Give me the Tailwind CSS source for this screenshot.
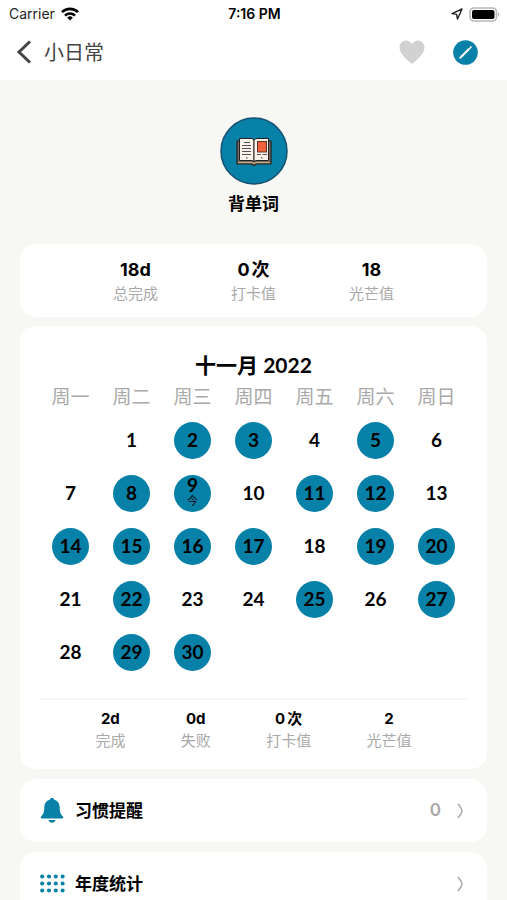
<!DOCTYPE html>
<html lang="zh-CN">
  <head>
    <meta charset="UTF-8" />
    <meta name="viewport" content="width=device-width, initial-scale=1.0" />
    <title>小日常</title>
    <script src="https://cdn.jsdelivr.net/npm/@tailwindcss/browser@4"></script>
  </head>
  <body
    class="h-screen overflow-hidden bg-[#f7f7f3] text-black font-['Inter','Noto_Sans_CJK_SC',sans-serif]"
  >
    <header class="bg-white">
      <!-- status bar -->
      <div class="grid grid-cols-3 items-center h-7 pl-[9px] pr-[7px] text-sm">
        <div class="flex items-center gap-1.5 text-[#222]">
          <span>Carrier</span>
          <svg class="w-[18px] h-[14px]" viewBox="0 0 18 14" fill="none" stroke="#000" stroke-width="2.6">
            <path d="M1 5.2a11.3 11.3 0 0 1 16 0" />
            <path d="M4 8.6a7.1 7.1 0 0 1 10 0" />
            <path d="M9 13.6 6.2 10.7a4 4 0 0 1 5.6 0z" fill="#000" stroke="none" />
          </svg>
        </div>
        <div class="text-center font-semibold">7:16 PM</div>
        <div class="flex items-center justify-end gap-1.5">
          <svg class="w-3 h-3" viewBox="0 0 12 12" fill="none" stroke="#222" stroke-width="1.4" stroke-linejoin="round">
            <path d="M11 1 1 5.6l4.6.8.9 4.6z" />
          </svg>
          <svg class="w-[31px] h-[15px]" viewBox="0 0 31 15">
            <rect x="1" y="1" width="26.5" height="13" rx="4" fill="#fff" stroke="#b8b8b8" stroke-width="1.6" />
            <rect x="3" y="3" width="22.5" height="9" rx="2" fill="#000" />
            <path d="M29 5.2a2.6 2.6 0 0 1 0 4.6z" fill="#b8b8b8" />
          </svg>
        </div>
      </div>

      <!-- nav -->
      <nav class="flex items-center h-[52px] pb-1 pl-4 pr-[29px]">
        <a href="#" class="flex items-center gap-3 text-xl text-[#444]">
          <svg class="w-4 h-6" viewBox="0 0 16 24" fill="none" stroke="#444" stroke-width="3">
            <path d="M14 1.5 3 12l11 10.5" />
          </svg>
          <span class="pt-0.5">小日常</span>
        </a>
        <button type="button" aria-label="收藏" class="ml-auto">
          <svg class="w-[26px] h-6" viewBox="0 0 26 24" fill="#d2d2d2">
            <path d="M13 24C9 20.5.5 14.5.5 7.5c0-4 2.8-7 6.5-7 2.700 0 4.800 1.500 6 3.700C14.200 2 16.300.5 19 .5c3.700 0 6.500 3 6.500 7 0 7-8.500 13-12.500 16.500z" />
          </svg>
        </button>
        <button type="button" aria-label="编辑" class="ml-7">
          <svg class="w-[25px] h-[25px]" viewBox="0 0 25 25">
            <circle cx="12.5" cy="12.5" r="12.3" fill="#0781a8" />
            <path d="m7.300 17.700 8.700-8.700" stroke="#fff" stroke-width="2" stroke-linecap="round" />
            <path d="m17.500 7.500.3-.3" stroke="#fff" stroke-width="2" stroke-linecap="round" />
          </svg>
        </button>
      </nav>
    </header>

    <main class="px-5">
      <!-- habit -->
      <section class="flex flex-col items-center pt-[37px] pb-7">
        <svg class="w-[68px] h-[68px]" viewBox="0 0 68 68">
          <circle cx="34" cy="34" r="33" fill="#0781a8" stroke="#15506f" stroke-width="1.5" />
          <path d="M17 24h34v23H37l-3 1.500-3-1.500H17z" fill="#7a6a5c" stroke="#222" stroke-width="1.200" stroke-linejoin="round" />
          <path d="M18 45.500h14l2 1 2-1h14" fill="none" stroke="#c9b18b" stroke-width="1" />
          <path d="M19.500 21.500H32l2 1.500v21.500l-2-1H19.500z" fill="#fbf3ea" stroke="#222" stroke-width="1" stroke-linejoin="round" />
          <path d="M48.500 21.500H36L34 23v21.500l2-1h12.500z" fill="#fbf3ea" stroke="#222" stroke-width="1" stroke-linejoin="round" />
          <path d="M24 25.500h6M22 28.500h9M22 31.500h9M22 34.500h9M22 37.500h9M37 37.500h4M42.500 37.500H47" stroke="#5b5058" stroke-width="1.200" />
          <path d="M26 40.800h1.500M41 40.800h1.500" stroke="#5b5058" stroke-width="1.200" />
          <rect x="37.500" y="24.500" width="9" height="10.500" fill="#f2603c" stroke="#5a3028" stroke-width="1" />
        </svg>
        <h1 class="mt-[7px] text-[17px] leading-6 font-bold">背单词</h1>
      </section>

      <!-- totals -->
      <section class="flex justify-evenly bg-white rounded-2xl px-5 pt-[13px] h-[73px] text-center">
        <div>
          <p class="text-lg leading-[26px] font-bold">18d</p>
          <p class="text-[15px] leading-[22px] text-[#a9a9a9]">总完成</p>
        </div>
        <div>
          <p class="text-lg leading-[26px] font-bold">0<span class="ml-0.5">次</span></p>
          <p class="text-[15px] leading-[22px] text-[#a9a9a9]">打卡值</p>
        </div>
        <div>
          <p class="text-lg leading-[26px] font-bold">18</p>
          <p class="text-[15px] leading-[22px] text-[#a9a9a9]">光芒值</p>
        </div>
      </section>

      <!-- month -->
      <section class="mt-[9px] bg-white rounded-2xl px-5 pt-6 pb-[17px]">
        <h2 class="text-center text-[21px] leading-[30px] font-bold font-['Lato','Noto_Sans_CJK_SC',sans-serif]">
          十一月 2022
        </h2>
        <table class="w-full table-fixed text-center font-['Lato','Noto_Sans_CJK_SC',sans-serif]">
          <thead>
            <tr class="h-[34px] text-[19px] text-[#a9a9a9]">
              <th class="font-normal">周一</th>
              <th class="font-normal">周二</th>
              <th class="font-normal">周三</th>
              <th class="font-normal">周四</th>
              <th class="font-normal">周五</th>
              <th class="font-normal">周六</th>
              <th class="font-normal">周日</th>
            </tr>
          </thead>
          <tbody id="days"></tbody>
        </table>
        <div class="mt-[19px] border-t-2 border-[#f5f5f5]"></div>
        <div class="flex justify-evenly pt-2 text-center">
          <div>
            <p class="text-[15px] leading-[22px] font-bold">2d</p>
            <p class="text-[15px] leading-[22px] text-[#a9a9a9]">完成</p>
          </div>
          <div>
            <p class="text-[15px] leading-[22px] font-bold">0d</p>
            <p class="text-[15px] leading-[22px] text-[#a9a9a9]">失败</p>
          </div>
          <div>
            <p class="text-[15px] leading-[22px] font-bold">0<span class="ml-0.5">次</span></p>
            <p class="text-[15px] leading-[22px] text-[#a9a9a9]">打卡值</p>
          </div>
          <div>
            <p class="text-[15px] leading-[22px] font-bold">2</p>
            <p class="text-[15px] leading-[22px] text-[#a9a9a9]">光芒值</p>
          </div>
        </div>
      </section>

      <a href="#" class="mt-2.5 flex items-center h-[63px] bg-white rounded-2xl pl-5 pr-6">
        <svg class="w-6 h-[25px]" viewBox="0 0 24 25" fill="#0781a8">
          <path d="M12 0c1.200 0 2 .7 2.300 1.700 3.400 1 5.400 3.900 5.400 7.500 0 5.300 1 6.800 3.200 9.400.7.900.4 1.900-.8 1.900H1.900c-1.200 0-1.500-1-.8-1.900 2.200-2.600 3.200-4.100 3.200-9.400 0-3.600 2-6.500 5.400-7.500C10 .7 10.800 0 12 0z" />
          <path d="M8.500 22h7c-.4 1.700-1.800 2.800-3.500 2.800S8.900 23.700 8.500 22z" />
        </svg>
        <span class="ml-[11px] pt-0.5 text-[17px] font-bold">习惯提醒</span>
        <span class="ml-auto text-[17px] font-semibold text-[#a9a9a9]">0</span>
        <svg class="ml-4 w-1.5 h-4" viewBox="0 0 6 16" fill="none" stroke="#a9a9a9" stroke-width="1.5">
          <path d="M1 1Q5 6 5 8T1 15" />
        </svg>
      </a>

      <a href="#" class="mt-2.5 flex items-center h-[63px] bg-white rounded-2xl pl-5 pr-6">
        <svg class="w-[25px] h-[19px]" viewBox="0 0 25 19" fill="none" stroke="#0781a8" stroke-width="4.2" stroke-linecap="round">
          <path d="M2.200 2.500h21.100M2.200 9.500h21.100M2.200 16.500h21.100" stroke-dasharray="0 6.800" />
        </svg>
        <span class="ml-2.5 pt-0.5 text-[17px] font-bold">年度统计</span>
        <svg class="ml-auto w-1.5 h-4" viewBox="0 0 6 16" fill="none" stroke="#a9a9a9" stroke-width="1.5">
          <path d="M1 1Q5 6 5 8T1 15" />
        </svg>
      </a>
    </main>

    <script>
      const done = [2, 3, 5, 8, 9, 11, 12, 14, 15, 16, 17, 19, 20, 22, 25, 27, 29, 30];
      const today = 9;
      const base = "mx-auto flex flex-col items-center justify-center size-[37px] rounded-full text-[19px] font-bold";

      // 1 November 2022 is a Tuesday, so day 0 is an empty Monday
      let rows = "";
      for (let start = 0; start <= 30; start += 7) {
        rows += '<tr class="h-[53px]">';
        for (let day = start; day < start + 7; day++) {
          if (day < 1 || day > 30) {
            rows += "<td></td>";
            continue;
          }
          const fill = done.includes(day) ? " bg-[#0781a8]" : "";
          const label =
            day === today
              ? `<span class="leading-4">${day}</span><span class="mb-0.5 text-[11px] leading-4 font-normal">今</span>`
              : day;
          rows += `<td class="p-0"><button type="button" class="${base}${fill}">${label}</button></td>`;
        }
        rows += "</tr>";
      }
      document.getElementById("days").innerHTML = rows;
    </script>
  </body>
</html>
